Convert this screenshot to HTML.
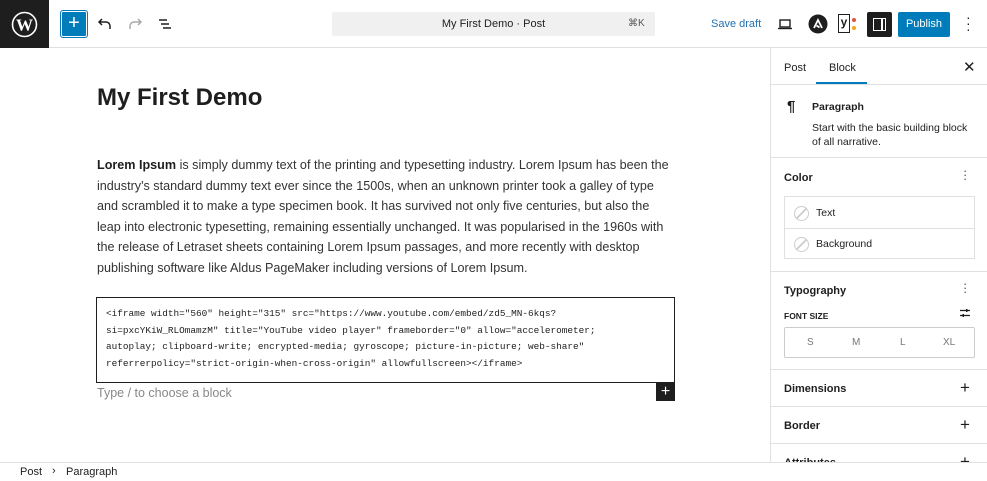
<!DOCTYPE html>
<html><head><meta charset="utf-8">
<style>
*{box-sizing:border-box;margin:0;padding:0}
body{width:987px;height:481px;overflow:hidden;background:#fff;font-family:"Liberation Sans",sans-serif;color:#1e1e1e;position:relative}
.a{position:absolute}
.top{left:0;top:0;width:987px;height:48px;border-bottom:1px solid #e0e0e0}
.side{left:770px;top:48px;width:217px;height:414px;border-left:1px solid #e0e0e0;overflow:hidden}
.hr{position:absolute;left:0;width:217px;height:1px;background:#e0e0e0}
.foot{left:0;top:462px;width:987px;height:19px;border-top:1px solid #e0e0e0;font-size:11px}
.p{font-size:12.6px;line-height:20.5px;color:#333;white-space:nowrap}
.code{font-family:"Liberation Mono",monospace;font-size:9.4px;line-height:16.7px;white-space:pre;color:#1e1e1e}
.st{font-size:11px;font-weight:bold;color:#1e1e1e}
</style></head><body>
<div class="a top">
  <div class="a" style="left:0;top:0;width:49px;height:48px;background:#1e1e1e"></div>
  <svg class="a" style="left:11px;top:11px" width="27" height="27" viewBox="0 0 27 27"><circle cx="13.5" cy="13.5" r="12" fill="none" stroke="#fff" stroke-width="1.6"/><text x="13.5" y="19.5" text-anchor="middle" font-family="Liberation Serif" font-weight="bold" font-size="17" fill="#fff">W</text></svg>
  <div class="a" style="left:61px;top:11px;width:26px;height:26px;background:#007cba;border-radius:2px;box-shadow:inset 0 0 0 1px #fff;outline:1px solid #007cba"></div>
  <div class="a" style="left:61px;top:10px;width:26px;height:26px;color:#fff;font-size:20px;text-align:center;line-height:26px">+</div>
  <svg class="a" style="left:97px;top:16px" width="16" height="16" viewBox="0 0 16 16"><path d="M5 3L2 6l3 3M2 6h7a4 4 0 0 1 4 4v3" fill="none" stroke="#1e1e1e" stroke-width="1.5"/></svg>
  <svg class="a" style="left:127px;top:16px" width="16" height="16" viewBox="0 0 16 16"><path d="M11 3l3 3-3 3M14 6H7a4 4 0 0 0-4 4v3" fill="none" stroke="#aaa" stroke-width="1.5"/></svg>
  <svg class="a" style="left:157px;top:16px" width="16" height="16" viewBox="0 0 16 16"><path d="M2 4h8M4 8h8M6 12h8" stroke="#1e1e1e" stroke-width="1.5"/></svg>
  <div class="a" style="left:332px;top:12px;width:323px;height:24px;background:#f0f0f0;border-radius:2px;font-size:11px;line-height:24px;text-align:center;color:#1e1e1e">My First Demo · Post</div>
  <div class="a" style="left:628px;top:12px;font-size:10px;line-height:24px;color:#555">⌘K</div>
  <div class="a" style="left:711px;top:18px;font-size:11px;color:#2271b1">Save draft</div>
  <svg class="a" style="left:777px;top:16px" width="16" height="16" viewBox="0 0 16 16"><rect x="3" y="4" width="10" height="7" fill="none" stroke="#1e1e1e" stroke-width="1.4"/><path d="M1 12.5h14" stroke="#1e1e1e" stroke-width="1.4"/></svg>
  <svg class="a" style="left:808px;top:14px" width="20" height="20" viewBox="0 0 20 20"><circle cx="10" cy="10" r="9.5" fill="#1e1e1e"/><path d="M6 14l4-8 4 8M8.5 11.5l3 2" stroke="#fff" stroke-width="1.8" fill="none"/></svg>
  <div class="a" style="left:838px;top:14px;width:12px;height:19px;border:1.5px solid #1e1e1e;font-size:12px;font-weight:bold;line-height:15px;text-align:center">y</div>
  <div class="a" style="left:852px;top:18px;width:4px;height:4px;border-radius:2px;background:#e0533c"></div>
  <div class="a" style="left:852px;top:26px;width:4px;height:4px;border-radius:2px;background:#f7a21b"></div>
  <div class="a" style="left:867px;top:12px;width:25px;height:25px;background:#1e1e1e;border-radius:2px"></div>
  <div class="a" style="left:873px;top:18px;width:13px;height:13px;border:1.5px solid #fff"></div>
  <div class="a" style="left:881px;top:18px;width:1.5px;height:13px;background:#fff"></div>
  <div class="a" style="left:898px;top:12px;width:52px;height:25px;background:#007cba;border-radius:2px;color:#fff;font-size:11px;line-height:25px;text-align:center">Publish</div>
  <div class="a" style="left:966px;top:14px;font-size:14px;line-height:6px;color:#1e1e1e">·<br>·<br>·</div>
</div>

<div class="a" style="left:97px;top:84px;font-size:24px;font-weight:bold;color:#1e1e1e">My First Demo</div>
<div class="a p" style="left:97px;top:155px"><b style="color:#1e1e1e">Lorem Ipsum</b> is simply dummy text of the printing and typesetting industry. Lorem Ipsum has been the<br>industry's standard dummy text ever since the 1500s, when an unknown printer took a galley of type<br>and scrambled it to make a type specimen book. It has survived not only five centuries, but also the<br>leap into electronic typesetting, remaining essentially unchanged. It was popularised in the 1960s with<br>the release of Letraset sheets containing Lorem Ipsum passages, and more recently with desktop<br>publishing software like Aldus PageMaker including versions of Lorem Ipsum.</div>
<div class="a" style="left:96px;top:297px;width:579px;height:86px;border:1px solid #1e1e1e"></div>
<div class="a code" style="left:106px;top:306px">&lt;iframe width="560" height="315" src="https://www.youtube.com/embed/zd5_MN-6kqs?
si=pxcYKiW_RLOmamzM" title="YouTube video player" frameborder="0" allow="accelerometer;
autoplay; clipboard-write; encrypted-media; gyroscope; picture-in-picture; web-share"
referrerpolicy="strict-origin-when-cross-origin" allowfullscreen&gt;&lt;/iframe&gt;</div>
<div class="a" style="left:97px;top:386px;font-size:12.5px;color:#888">Type / to choose a block</div>
<div class="a" style="left:656px;top:383px;width:19px;height:18px;background:#1e1e1e;color:#fff;font-size:16px;line-height:18px;text-align:center">+</div>

<div class="a side">
  <div class="a" style="left:13px;top:14px;font-size:11px">Post</div>
  <div class="a" style="left:58px;top:14px;font-size:11px">Block</div>
  <div class="a" style="left:45px;top:34px;width:51px;height:2px;background:#007cba"></div>
  <div class="a" style="left:192px;top:10px;font-size:15px">✕</div>
  <div class="hr" style="top:36px"></div>
  <div class="a" style="left:16px;top:50px;font-size:15px;font-weight:bold">¶</div>
  <div class="a" style="left:41px;top:53px;font-size:10.5px;font-weight:bold;color:#1e1e1e">Paragraph</div>
  <div class="a" style="left:41px;top:73px;font-size:10.5px;line-height:14px;color:#1e1e1e">Start with the basic building block<br>of all narrative.</div>
  <div class="hr" style="top:109px"></div>
  <div class="a st" style="left:13px;top:124px">Color</div>
  <div class="a" style="left:192px;top:121px;font-size:13px;line-height:4px;color:#555">·<br>·<br>·</div>
  <div class="a" style="left:13px;top:148px;width:191px;height:63px;border:1px solid #e0e0e0"></div>
  <div class="hr" style="top:180px;left:14px;width:189px"></div>
  <div class="a" style="left:23px;top:158px;width:15px;height:15px;border:1px solid #ccc;border-radius:50%;background:linear-gradient(135deg,transparent 46%,#ccc 46%,#ccc 54%,transparent 54%)"></div>
  <div class="a" style="left:45px;top:159px;font-size:10.5px">Text</div>
  <div class="a" style="left:23px;top:189px;width:15px;height:15px;border:1px solid #ccc;border-radius:50%;background:linear-gradient(135deg,transparent 46%,#ccc 46%,#ccc 54%,transparent 54%)"></div>
  <div class="a" style="left:45px;top:190px;font-size:10.5px">Background</div>
  <div class="hr" style="top:223px"></div>
  <div class="a st" style="left:13px;top:237px">Typography</div>
  <div class="a" style="left:192px;top:234px;font-size:13px;line-height:4px;color:#555">·<br>·<br>·</div>
  <div class="a" style="left:13px;top:263px;font-size:8.5px;font-weight:bold;color:#1e1e1e">FONT SIZE</div>
  <svg class="a" style="left:188px;top:259px" width="12" height="12" viewBox="0 0 12 12"><path d="M1 3.5h10M1 8.5h10" stroke="#1e1e1e" stroke-width="1.2"/><rect x="7" y="2" width="1.5" height="3" fill="#1e1e1e"/><rect x="3.5" y="7" width="1.5" height="3" fill="#1e1e1e"/></svg>
  <div class="a" style="left:13px;top:279px;width:191px;height:31px;border:1px solid #ccc;border-radius:2px;font-size:10px;color:#777;line-height:29px">
    <span class="a" style="left:22px">S</span><span class="a" style="left:67px">M</span><span class="a" style="left:115px">L</span><span class="a" style="left:158px">XL</span>
  </div>
  <div class="hr" style="top:321px"></div>
  <div class="a st" style="left:13px;top:335px">Dimensions</div>
  <div class="a" style="left:189px;top:330px;font-size:17px">+</div>
  <div class="hr" style="top:358px"></div>
  <div class="a st" style="left:13px;top:372px">Border</div>
  <div class="a" style="left:189px;top:367px;font-size:17px">+</div>
  <div class="hr" style="top:395px"></div>
  <div class="a st" style="left:13px;top:409px">Attributes</div>
  <div class="a" style="left:189px;top:404px;font-size:17px">+</div>
</div>

<div class="a foot">
  <div class="a" style="left:20px;top:3px">Post</div>
  <div class="a" style="left:52px;top:2px;font-size:11px">›</div>
  <div class="a" style="left:66px;top:3px">Paragraph</div>
</div>
</body></html>
